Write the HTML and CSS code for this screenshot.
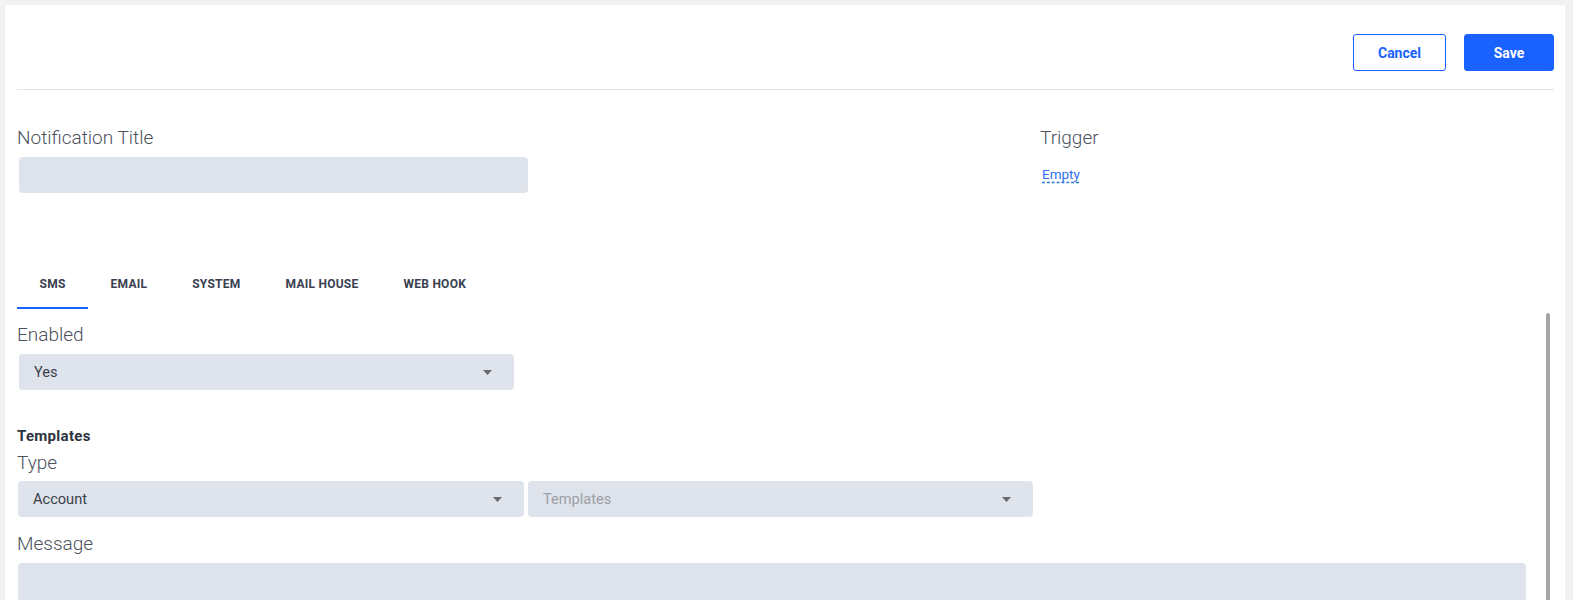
FILE: index.html
```html
<!DOCTYPE html>
<html lang="en">
<head>
<meta charset="utf-8">
<title>Notification</title>
<link rel="stylesheet" href="styles.css">
</head>
<body>
<div class="panel">
  <header class="header">
    <button class="btn btn-outline">Cancel</button>
    <button class="btn btn-primary">Save</button>
  </header>

  <div class="top-row">
    <div class="col-title">
      <div class="label">Notification Title</div>
      <div class="field field-title"></div>
    </div>
    <div class="col-trigger">
      <div class="label">Trigger</div>
      <a class="link-empty" href="#">Empty</a>
    </div>
  </div>

  <nav class="tabs">
    <span class="tab active">SMS</span>
    <span class="tab">EMAIL</span>
    <span class="tab">SYSTEM</span>
    <span class="tab">MAIL HOUSE</span>
    <span class="tab">WEB HOOK</span>
  </nav>

  <div class="tab-area">
    <div class="tab-body">
      <div class="label label-first">Enabled</div>
      <div class="field select field-enabled">
        <span class="value">Yes</span>
        <svg class="caret" width="9" height="5" viewBox="0 0 9 5"><path d="M0 0h9L4.5 5z" fill="#666a70"/></svg>
      </div>

      <div class="section-title">Templates</div>
      <div class="label label-type">Type</div>
      <div class="select-row">
        <div class="field select field-half field-account">
          <span class="value">Account</span>
          <svg class="caret" width="9" height="5" viewBox="0 0 9 5"><path d="M0 0h9L4.5 5z" fill="#666a70"/></svg>
        </div>
        <div class="field select field-half">
          <span class="value placeholder">Templates</span>
          <svg class="caret" width="9" height="5" viewBox="0 0 9 5"><path d="M0 0h9L4.5 5z" fill="#666a70"/></svg>
        </div>
      </div>

      <div class="label label-message">Message</div>
      <div class="field field-message"></div>
    </div>
    <div class="scroll-thumb"></div>
  </div>
</div>
</body>
</html>
```

FILE: styles.css
```css
html, body {
  height: 100%;
  overflow: hidden;
}

body {
  margin: 0;
  background: #f1f2f4;
  font-family: Roboto, "Liberation Sans", Arial, sans-serif;
  color: #3a3f4a;
}

.panel {
  margin: 5px 8px 0 5px;
  background: #ffffff;
  padding-left: 12px;
  height: 700px;
}

.header {
  display: flex;
  justify-content: flex-end;
  gap: 18px;
  padding: 29px 0 18px;
  margin-right: 11px;
  border-bottom: 1px solid #e1e3e6;
}

.btn {
  height: 37px;
  border-radius: 3px;
  font-family: Roboto, "Liberation Sans", Arial, sans-serif;
  font-size: 14px;
  font-weight: 700;
  cursor: pointer;
}

.btn-outline {
  width: 93px;
  background: #ffffff;
  color: #1a62ff;
  border: 1px solid #1a62ff;
}

.btn-primary {
  width: 90px;
  background: #1a62ff;
  color: #ffffff;
  border: 1px solid #1a62ff;
}

.top-row {
  display: flex;
  margin-top: 36px;
}

.col-title {
  width: 1023px;
}

.col-trigger {
  flex: 1;
}

.label {
  font-size: 19px;
  font-weight: 300;
  line-height: 24px;
  color: #4a505c;
}

.field {
  background: #dfe3eb;
  border-radius: 4px;
  height: 36px;
  box-sizing: border-box;
}

.field-title {
  margin: 7px 0 0 2px;
  width: 509px;
}

.link-empty {
  display: inline-block;
  margin: 14px 0 0 2px;
  font-size: 13.5px;
  line-height: 20px;
  color: #2f6fed;
  text-decoration: underline dashed #2a7ad6;
  text-underline-offset: 3px;
}

.tabs {
  display: flex;
  margin-top: 67px;
}

.tab {
  padding: 2px 22.5px 0;
  height: 45px;
  line-height: 45px;
  font-size: 12px;
  font-weight: 700;
  letter-spacing: 0.25px;
  color: #394050;
  border-bottom: 2px solid transparent;
}

.tab.active {
  border-bottom-color: #1a62ff;
}

.tab-area {
  display: flex;
}

.tab-body {
  flex: 1;
}

.scroll-thumb {
  width: 4px;
  height: 400px;
  margin: 4px 15px 0 0;
  background: #a5a5a5;
  border-radius: 2px 2px 0 0;
}

.label-first {
  margin-top: 14px;
}

.select {
  display: flex;
  align-items: center;
  justify-content: space-between;
  padding: 0 22px 0 15px;
  font-size: 14.6px;
}

.field-enabled {
  margin: 7px 0 0 2px;
  width: 495px;
}

.value {
  color: #3a3f4a;
}

.value.placeholder {
  color: #9ba0a8;
}

.section-title {
  margin-top: 36px;
  font-size: 15px;
  font-weight: 700;
  letter-spacing: 0.3px;
  line-height: 20px;
  color: #2d3340;
}

.label-type {
  margin-top: 5px;
}

.select-row {
  display: flex;
  gap: 4px;
  margin: 6px 0 0 1px;
}

.field-half {
  width: 505px;
}

.field-account {
  width: 506px;
}

.label-message {
  margin-top: 15px;
}

.field-message {
  margin: 7px 0 0 1px;
  width: 1508px;
  height: 120px;
}
```
